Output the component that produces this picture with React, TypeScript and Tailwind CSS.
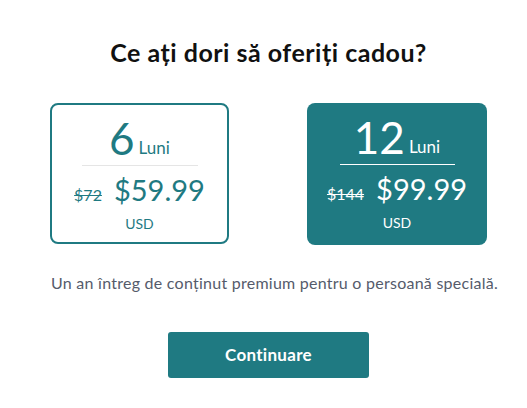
import React from "react";

export default function App() {
  return (
    <div className="w-[527px] h-[408px] bg-white flex flex-col items-center pl-[10px]" style={{ fontFamily: "Lato, 'Noto Sans', sans-serif" }}>
      <h1 className="mt-[37px] text-[25px] leading-[31px] font-bold text-[#111] tracking-[0.5px]">Ce ați dori să oferiți cadou?</h1>
      <div className="mt-[35px] flex gap-[78px]">
        <div className="w-[179px] h-[141px] rounded-[8px] border-2 border-[#1f7a82] flex flex-col items-center text-[#1f7a82]">
          <div className="mt-[10px] flex items-end h-[46px]">
            <span className="text-[44px] leading-[46px]">6</span>
            <span className="text-[17px] leading-[20px] ml-[4px] mb-[3px]">Luni</span>
          </div>
          <div className="w-[116px] h-px bg-[#e5e5e5] mt-[4px]"></div>
          <div className="mt-[6px] flex items-baseline">
            <span className="text-[16px] line-through mr-[12px]">$72</span>
            <span className="text-[29px] leading-[36px]">$59.99</span>
          </div>
          <div className="text-[14px] leading-[18px] mt-[7px]">USD</div>
        </div>
        <div className="w-[180px] h-[142px] rounded-[8px] bg-[#1f7a82] flex flex-col items-center text-white">
          <div className="mt-[11px] flex items-end h-[46px]">
            <span className="text-[44px] leading-[46px]">12</span>
            <span className="text-[17px] leading-[20px] ml-[4px] mb-[3px]">Luni</span>
          </div>
          <div className="w-[115px] h-px bg-white mt-[4px]"></div>
          <div className="mt-[6px] flex items-baseline">
            <span className="text-[16px] line-through mr-[12px]">$144</span>
            <span className="text-[29px] leading-[36px]">$99.99</span>
          </div>
          <div className="text-[14px] leading-[18px] mt-[7px]">USD</div>
        </div>
      </div>
      <p className="mt-[27px] ml-[12px] text-[16px] leading-[22px] text-[#555b6b] tracking-[0.25px]">Un an întreg de conținut premium pentru o persoană specială.</p>
      <button className="mt-[38px] w-[201px] h-[46px] rounded-[3px] bg-[#1f7a82] text-white font-bold text-[17px] tracking-[0.3px]">Continuare</button>
    </div>
  );
}
